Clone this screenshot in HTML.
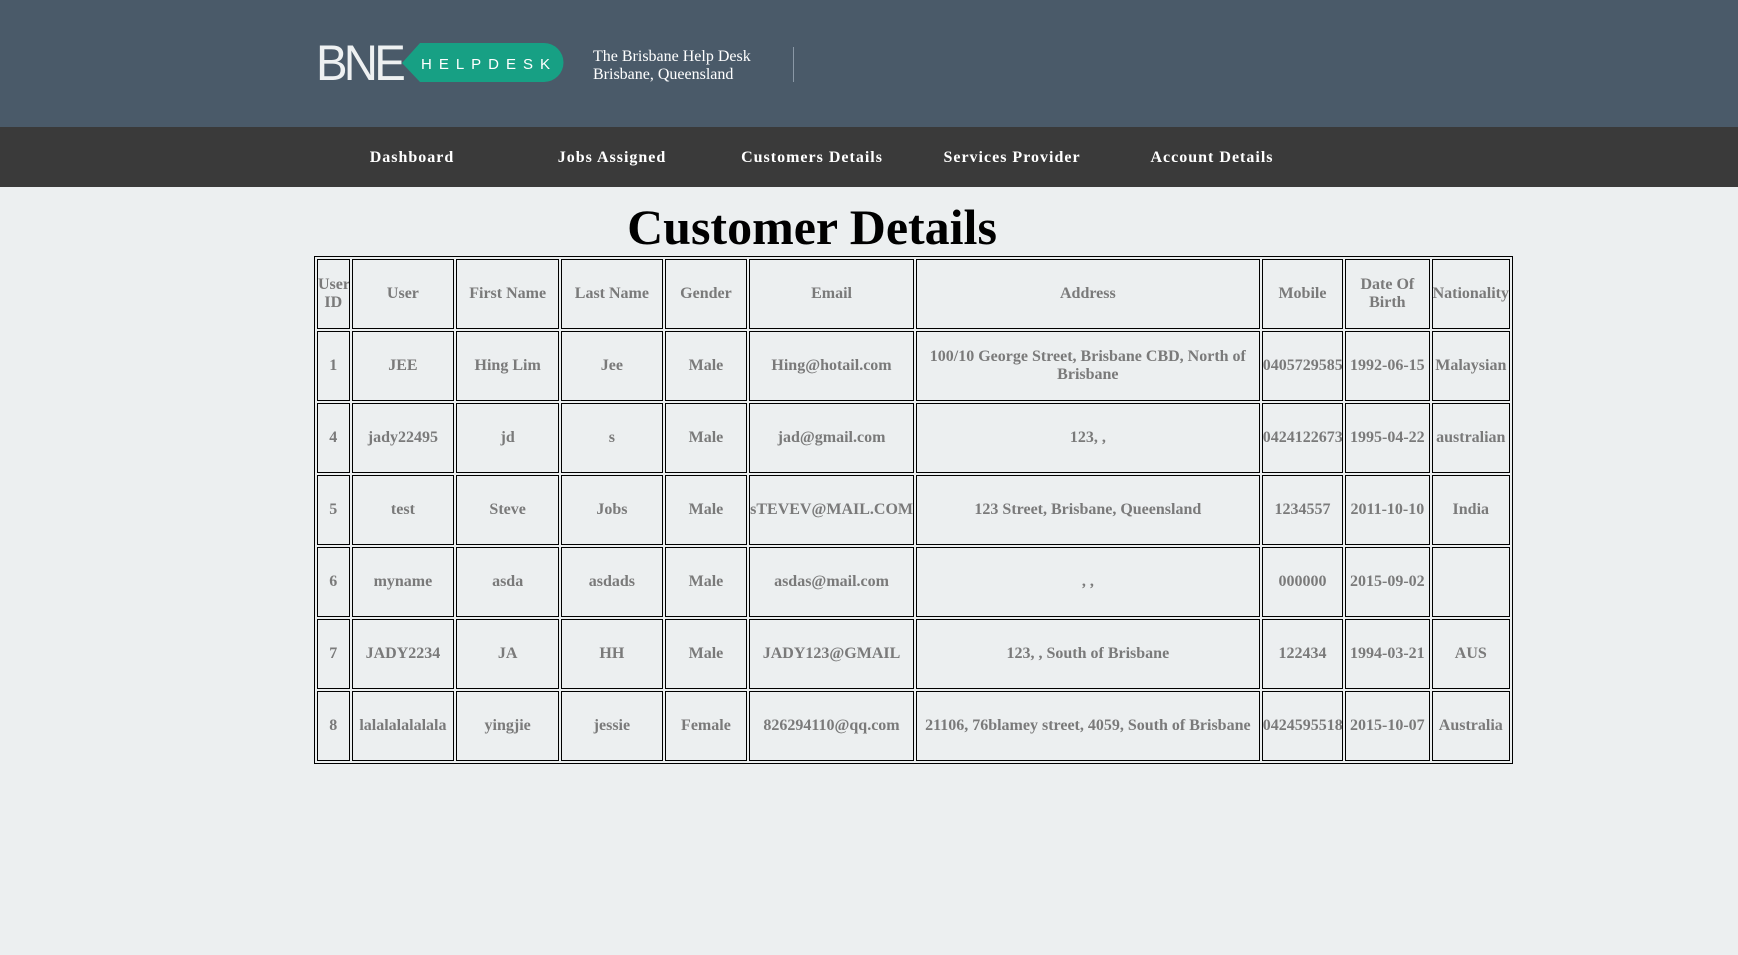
<!DOCTYPE html>
<html><head><meta charset="utf-8"><style>
*{margin:0;padding:0;box-sizing:border-box}
body{width:1738px;height:955px;background:#eceff0;font-family:"Liberation Serif",serif;overflow:hidden}
.hdr{height:127px;background:#4a5a69;position:relative}
.nav{height:60px;background:#3a3a3a;position:relative}
.nav a{position:absolute;top:1px;line-height:60px;width:200px;text-align:center;color:#fff;font-weight:bold;font-size:16px;letter-spacing:1px;text-decoration:none}
.tl{position:absolute;left:593px;top:48px;color:#fff;font-size:16px;line-height:18px}
.vl{position:absolute;left:793px;top:47px;width:1px;height:35px;background:#8a98a6}
h1{position:absolute;top:198px;left:0;width:1624px;text-align:center;font-size:50px;font-weight:bold;color:#000}
table{position:absolute;left:314px;top:256px;border:1px solid #000;border-spacing:2px;table-layout:fixed;width:1199px}
td,th{border:1px solid #000;height:70px;text-align:center;vertical-align:middle;color:#7a7a7a;font-weight:bold;font-size:16px;line-height:18px;padding:0;overflow:hidden;white-space:normal}
</style></head><body>
<div class="hdr">
<svg style="position:absolute;left:316px;top:40px" width="250" height="44" viewBox="0 0 250 44">
<text x="0" y="40" font-family="Liberation Sans" font-size="50" fill="#eef1f2" letter-spacing="-4" textLength="86" lengthAdjust="spacingAndGlyphs">BNE</text>
<path d="M86 23 L104 3 H228 A19 19 0 0 1 228 42 H104 Z" fill="#17a084"/>
<text x="105" y="29" font-family="Liberation Sans" font-size="15" fill="#fff" letter-spacing="7">HELPDESK</text>
</svg>
<div class="tl">The Brisbane Help Desk<br>Brisbane, Queensland</div>
<div class="vl"></div>
</div>
<div class="nav">
<a style="left:312px">Dashboard</a><a style="left:512px">Jobs Assigned</a><a style="left:712px">Customers Details</a><a style="left:912px">Services Provider</a><a style="left:1112px">Account Details</a>
</div>
<h1>Customer Details</h1>
<table>
<colgroup><col style="width:32px"><col style="width:101px"><col style="width:101px"><col style="width:100px"><col style="width:81px"><col style="width:162px"><col style="width:338px"><col style="width:80px"><col style="width:83px"><col style="width:77px"></colgroup>
<tr><th>User ID</th><th>User</th><th>First Name</th><th>Last Name</th><th>Gender</th><th>Email</th><th>Address</th><th>Mobile</th><th>Date Of Birth</th><th>Nationality</th></tr>
<tr><td>1</td><td>JEE</td><td>Hing Lim</td><td>Jee</td><td>Male</td><td>Hing@hotail.com</td><td>100/10 George Street, Brisbane CBD, North of Brisbane</td><td>0405729585</td><td>1992-06-15</td><td>Malaysian</td></tr>
<tr><td>4</td><td>jady22495</td><td>jd</td><td>s</td><td>Male</td><td>jad@gmail.com</td><td>123, ,</td><td>0424122673</td><td>1995-04-22</td><td>australian</td></tr>
<tr><td>5</td><td>test</td><td>Steve</td><td>Jobs</td><td>Male</td><td>sTEVEV@MAIL.COM</td><td>123 Street, Brisbane, Queensland</td><td>1234557</td><td>2011-10-10</td><td>India</td></tr>
<tr><td>6</td><td>myname</td><td>asda</td><td>asdads</td><td>Male</td><td>asdas@mail.com</td><td>, ,</td><td>000000</td><td>2015-09-02</td><td></td></tr>
<tr><td>7</td><td>JADY2234</td><td>JA</td><td>HH</td><td>Male</td><td>JADY123@GMAIL</td><td>123, , South of Brisbane</td><td>122434</td><td>1994-03-21</td><td>AUS</td></tr>
<tr><td>8</td><td>lalalalalalala</td><td>yingjie</td><td>jessie</td><td>Female</td><td>826294110@qq.com</td><td>21106, 76blamey street, 4059, South of Brisbane</td><td>0424595518</td><td>2015-10-07</td><td>Australia</td></tr>
</table>
</body></html>
